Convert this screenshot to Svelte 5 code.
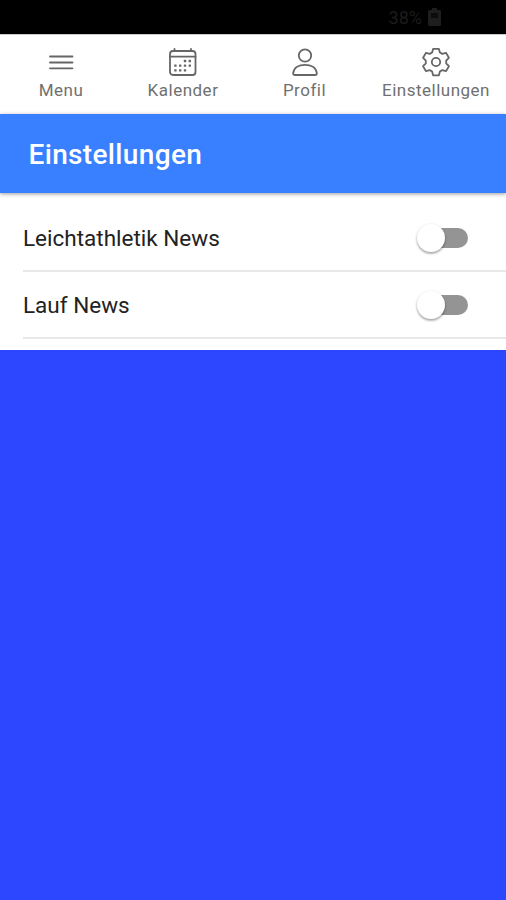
<script>
  let tabs = [
    { icon: "menu", label: "Menu" },
    { icon: "calendar", label: "Kalender" },
    { icon: "person", label: "Profil" },
    { icon: "settings", label: "Einstellungen" },
  ];

  let channels = $state([
    { name: "Leichtathletik News", enabled: false },
    { name: "Lauf News", enabled: false },
  ]);

  const dots = [
    [17, 14], [21.8, 14],
    [7.4, 18.6], [12.2, 18.6], [17, 18.6], [21.8, 18.6],
    [7.4, 23.4], [12.2, 23.4], [17, 23.4],
  ];
</script>

<div class="screen">
  <div class="status-bar">
    <span>38%</span>
    <svg class="battery" width="13" height="18" viewBox="0 0 13 18">
      <path d="M4 0h5v2h2.5A1.5 1.5 0 0 1 13 3.500v13a1.500 1.500 0 0 1-1.500 1.500h-10A1.500 1.500 0 0 1 0 16.500v-13A1.500 1.500 0 0 1 1.500 2H4z" fill="#1e1e1e" />
      <path d="M3 5h7v5H3z" fill="#0c0c0c" />
    </svg>
  </div>

  <nav>
    {#each tabs as tab}
      <button class="tab">
        <svg width="30" height="30" viewBox="0 0 30 30">
          {#if tab.icon === "menu"}
            <path d="M4 9.500h22.500M4 15.500h22.500M4 21.300h22.500" />
          {:else if tab.icon === "calendar"}
            <rect x="2" y="4" width="25.500" height="24" rx="3" />
            <path d="M2 9.700h25.500M6.500 2v2M23 2v2" />
            {#each dots as [x, y]}
              <rect class="dot" x={x - 1.2} y={y - 1.2} width="2.4" height="2.4" rx="0.5" />
            {/each}
          {:else if tab.icon === "person"}
            <circle cx="15" cy="8.500" r="6.200" />
            <path d="M4.800 28h20.400c1.200 0 1.800-.8 1.600-2C26 20.500 21 17.800 15 17.800S4 20.500 3.200 26c-.2 1.200.4 2 1.600 2z" />
          {:else}
            <path d="M12.100 1.900L17.900 1.900L18.900 5.500L21.300 6.900L25.100 5.900L27.900 10.800L25.200 13.600V16.400L27.900 19.200L25.100 24.100L21.300 23.100L18.900 24.500L17.900 28.300H12.100L11.100 24.500L8.700 23.100L4.900 24.100L2.100 19.200L4.800 16.400V13.600L2.100 10.800L4.900 5.900L8.700 6.900L11.100 5.500z" />
            <circle cx="15" cy="15" r="4.200" />
          {/if}
        </svg>
        <span>{tab.label}</span>
      </button>
    {/each}
  </nav>

  <header>
    <h1>Einstellungen</h1>
  </header>

  <ul>
    {#each channels as channel}
      <li>
        <span>{channel.name}</span>
        <button
          class="toggle"
          class:on={channel.enabled}
          aria-label={channel.name}
          onclick={() => (channel.enabled = !channel.enabled)}
        >
          <i></i>
        </button>
      </li>
    {/each}
  </ul>
</div>

<style>
  :global(body) {
    margin: 0;
    background: #2d46ff;
  }

  .screen {
    width: 506px;
    height: 900px;
    overflow: hidden;
    background: #2d46ff;
    font-family: Roboto, sans-serif;
  }

  .status-bar {
    display: flex;
    align-items: center;
    justify-content: flex-end;
    gap: 6px;
    height: 34px;
    padding-right: 65px;
    box-sizing: border-box;
    background: #000;
    color: #1c1c1c;
    font-size: 18px;
  }

  nav {
    display: grid;
    grid-template-columns: 122px 122px 121px 142px;
    height: 80px;
    box-sizing: border-box;
    border-top: 1px solid #ccc;
    background: #fff;
  }

  .tab {
    display: flex;
    flex-direction: column;
    align-items: center;
    padding: 12px 0 0;
    border: none;
    background: none;
    color: #707070;
    font-family: inherit;
    font-size: 17px;
    line-height: 20px;
    letter-spacing: 0.5px;
  }

  .tab span {
    margin-top: 3px;
  }

  .tab svg {
    fill: none;
    stroke: #666;
    stroke-width: 1.8;
    stroke-linejoin: round;
    stroke-linecap: round;
  }

  .tab .dot {
    fill: #666;
    stroke: none;
  }

  header {
    position: relative;
    height: 79px;
    padding-left: 28.5px;
    background: #3880ff;
    box-shadow: 0 1px 4px rgba(0, 0, 0, 0.4);
  }

  h1 {
    margin: 0;
    color: #fff;
    font-size: 28px;
    font-weight: 500;
    line-height: 81px;
    letter-spacing: 0.35px;
  }

  ul {
    margin: 0;
    padding: 11px 0 11px 23px;
    background: #fff;
    list-style: none;
  }

  li {
    display: flex;
    align-items: center;
    justify-content: space-between;
    height: 67.5px;
    padding-top: 2px;
    padding-right: 38px;
    box-sizing: border-box;
    border-bottom: 2px solid #e8e8e8;
    color: #222;
    font-size: 22.5px;
  }

  .toggle {
    display: flex;
    align-items: center;
    width: 42px;
    height: 20px;
    padding: 0;
    border: none;
    border-radius: 10px;
    background: #949494;
  }

  .toggle i {
    width: 28px;
    height: 28px;
    margin-left: -9px;
    border-radius: 50%;
    background: #fff;
    box-shadow: 0 2px 2px rgba(0, 0, 0, 0.2), 0 1px 3px rgba(0, 0, 0, 0.22);
  }

  .toggle.on {
    background: #9cbfff;
  }

  .toggle.on i {
    margin-left: 20px;
    background: #3880ff;
  }
</style>
